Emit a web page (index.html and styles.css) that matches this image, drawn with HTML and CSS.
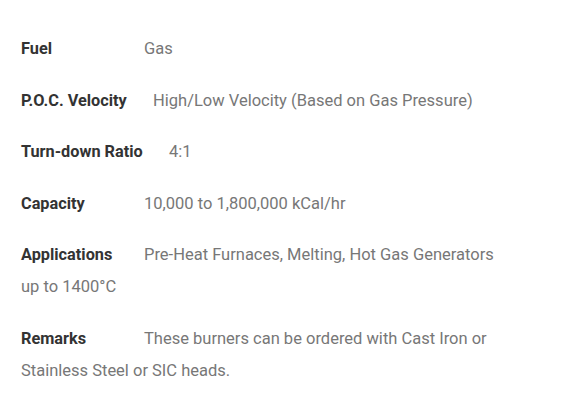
FILE: index.html
```html
<!DOCTYPE html>
<html lang="en">
<head>
<meta charset="utf-8">
<title>Burner Specifications</title>
<link rel="stylesheet" href="styles.css">
</head>
<body>
<div class="specs">
  <p class="spec"><span class="label">Fuel</span>Gas</p>
  <p class="spec"><span class="label label-poc">P.O.C. Velocity</span>High/Low Velocity (Based on Gas Pressure)</p>
  <p class="spec"><span class="label label-ratio">Turn-down Ratio</span>4:1</p>
  <p class="spec"><span class="label">Capacity</span>10,000 to 1,800,000 kCal/hr</p>
  <p class="spec"><span class="label">Applications</span>Pre-Heat Furnaces, Melting, Hot Gas Generators up to 1400°C</p>
  <p class="spec"><span class="label">Remarks</span>These burners can be ordered with Cast Iron or Stainless Steel or SIC heads.</p>
</div>
</body>
</html>
```

FILE: styles.css
```css
html, body {
  margin: 0;
  padding: 0;
  background: #ffffff;
}

body {
  font-family: Roboto, "Liberation Sans", Arial, sans-serif;
  font-size: 16.5px;
  color: #777777;
}

.specs {
  width: 483px;
  padding: 33px 0 0 21px;
}

.spec {
  margin: 0 0 19.5px;
  line-height: 32px;
}

.label {
  display: inline-block;
  width: 123px;
  font-size: 16.3px;
  font-weight: 700;
  color: #333333;
}

.label-poc {
  width: 132px;
}

.label-ratio {
  width: 148px;
}
```
